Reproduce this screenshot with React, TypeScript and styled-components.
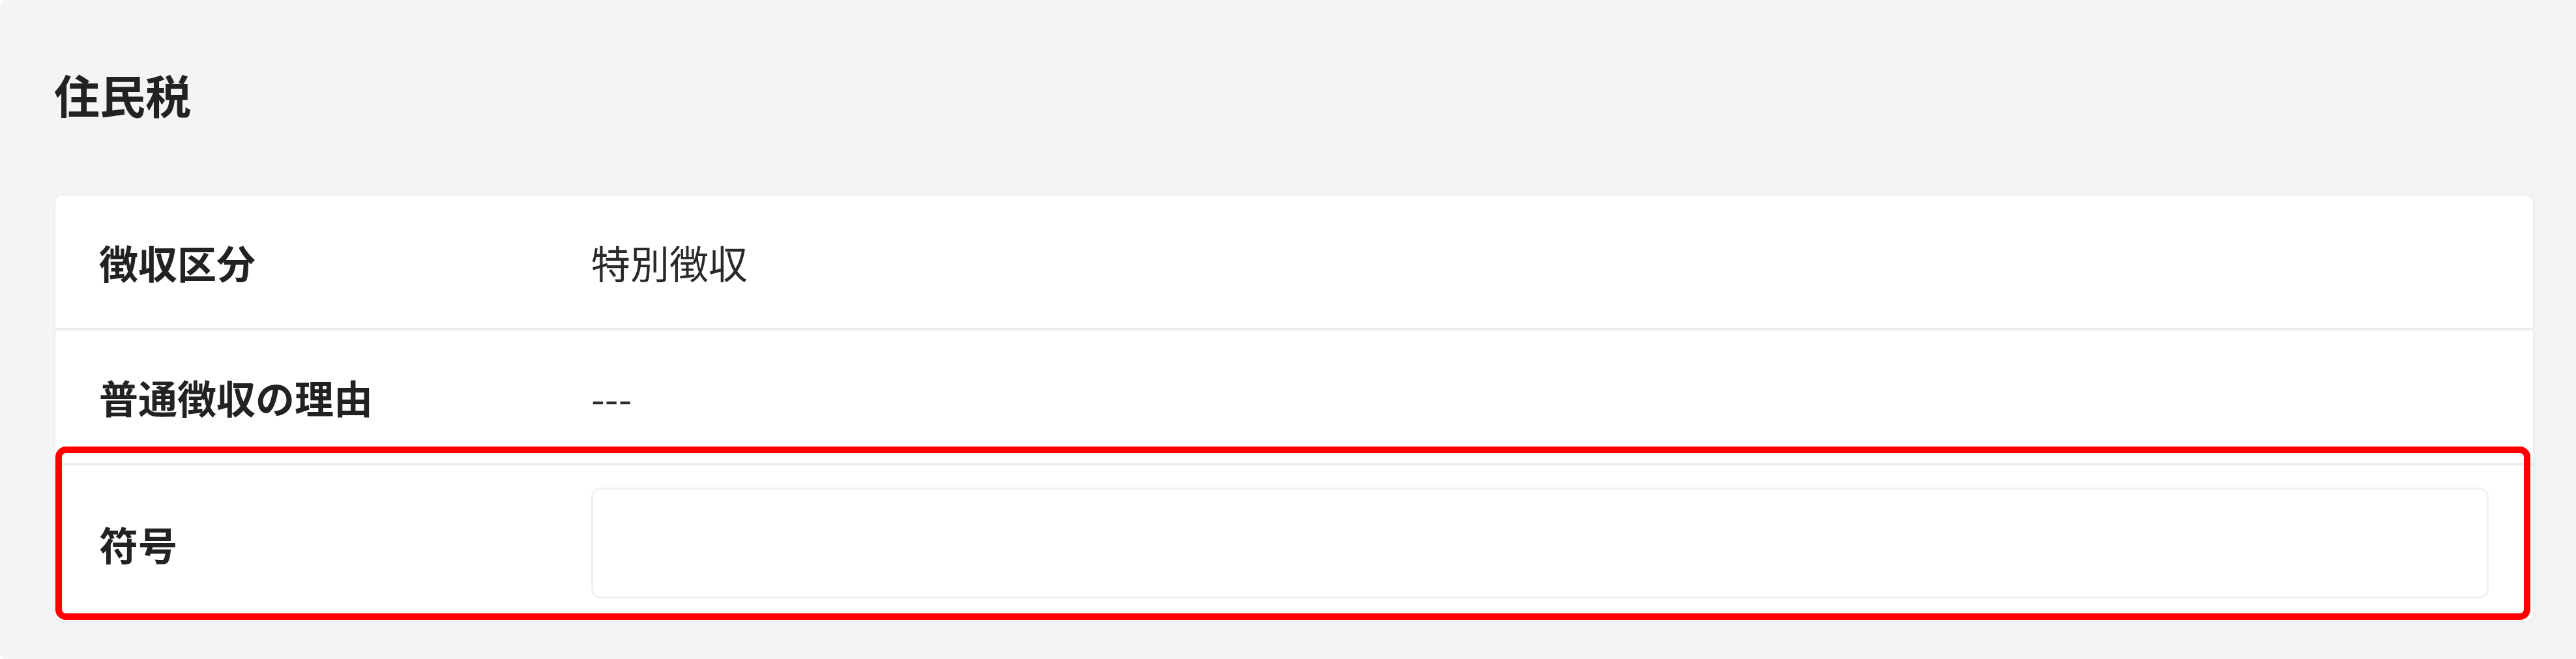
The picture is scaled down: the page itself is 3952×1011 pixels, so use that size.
import React from "react";
import styled, { createGlobalStyle } from "styled-components";

const GlobalStyle = createGlobalStyle`
  html, body {
    margin: 0;
    padding: 0;
    background: #ffffff;
  }
  body {
    font-family: "Noto Sans CJK JP", "Noto Sans", sans-serif;
    color: #222222;
  }
  * { box-sizing: border-box; }
`;

const Panel = styled.section`
  min-height: 1011px;
  background: #f3f4f6;
  border-radius: 12px 0 0 12px;
  padding: 110px 64px 54px 83px;
`;

const Title = styled.h2`
  margin: 0 0 118px 0;
  font-size: 70px;
  line-height: 70px;
  font-weight: 700;
  color: #222222;
`;

const Card = styled.div`
  background: #ffffff;
  border: 2px solid #eceef1;
  border-radius: 12px;
  box-shadow: 0 1px 3px rgba(0, 0, 0, 0.03);
`;

const Row = styled.div<{ $divider?: boolean }>`
  position: relative;
  display: grid;
  grid-template-columns: 755px 1fr;
  align-items: center;
  padding: 34px 68px 34px 67px;
  border-top: ${(p) => (p.$divider ? "4px solid #e9ecf0" : "none")};
`;

const Label = styled.div`
  min-height: 135px;
  display: flex;
  align-items: center;
  font-size: 60px;
  font-weight: 700;
  color: #222222;
`;

const Value = styled.div`
  font-size: 60px;
  font-weight: 400;
  color: #2a2a2a;
`;

const Field = styled.input`
  display: block;
  width: 100%;
  height: 170px;
  border: 3px solid #eff0f2;
  border-radius: 14px;
  background: #ffffff;
  font-family: inherit;
  font-size: 60px;
  padding: 0 30px;
  outline: none;
`;

const Highlight = styled.div`
  position: absolute;
  top: -29px;
  left: 0;
  right: 4px;
  bottom: 1px;
  border: 10px solid #ff0000;
  border-radius: 16px;
  pointer-events: none;
`;

const rows = [
  { label: "徴収区分", value: "特別徴収" },
  { label: "普通徴収の理由", value: "---" },
];

export default function App() {
  return (
    <>
      <GlobalStyle />
      <Panel>
        <Title>住民税</Title>
        <Card>
          {rows.map((r, i) => (
            <Row key={r.label} $divider={i > 0}>
              <Label>{r.label}</Label>
              <Value>{r.value}</Value>
            </Row>
          ))}
          <Row $divider>
            <Label>符号</Label>
            <Field type="text" aria-label="符号" />
            <Highlight />
          </Row>
        </Card>
      </Panel>
    </>
  );
}
